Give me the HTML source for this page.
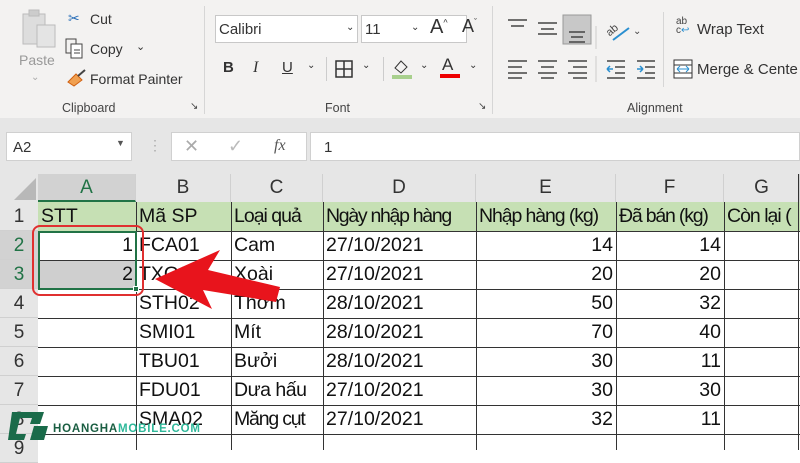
<!DOCTYPE html>
<html><head><meta charset="utf-8"><style>
*{margin:0;padding:0;box-sizing:border-box}
body{width:800px;height:450px;overflow:hidden;background:#fff;font-family:"Liberation Sans",sans-serif;position:relative;color:#222}
.a{position:absolute}
.rib{left:0;top:0;width:800px;height:118px;background:#f3f2f1}
.t{font-size:14px;color:#333;white-space:nowrap}
.g{font-size:12.5px;color:#444}
.cell{position:absolute;font-size:19.5px;line-height:29px;white-space:nowrap;overflow:hidden;padding:0 3px;color:#111}
.r{text-align:right}
.hl{position:absolute;left:38px;width:762px;height:1px;background:#333}
.vl{position:absolute;top:202px;height:248px;width:1px;background:#333}
.ch{position:absolute;top:174px;height:28px;font-size:19px;line-height:28px;text-align:center;color:#333;background:#e6e6e6;border-right:1px solid #d0d0d0}
.rh{position:absolute;left:0;width:38px;height:29px;font-size:19px;line-height:29px;text-align:center;color:#333;background:#e6e6e6;border-bottom:1px solid #d0d0d0}
</style></head><body>
<div class="a rib"></div>
<!-- clipboard -->
<svg class="a" style="left:20px;top:8px" width="40" height="42"><rect x="3" y="6" width="22" height="30" fill="#ddd" stroke="#bbb"/><rect x="9" y="2" width="10" height="6" fill="#ccc" stroke="#bbb"/><rect x="17" y="17" width="18" height="22" fill="#e4e4e4" stroke="#bbb"/></svg>
<div class="a t" style="left:19px;top:52px;color:#999">Paste</div>
<div class="a t" style="left:31px;top:72px;color:#aaa;font-size:10px">⌄</div>
<div class="a t" style="left:68px;top:10px;color:#2a6fb8">✂</div>
<div class="a t" style="left:90px;top:11px">Cut</div>
<svg class="a" style="left:65px;top:38px" width="20" height="22"><rect x="1" y="1" width="10" height="14" fill="none" stroke="#444"/><rect x="6" y="6" width="11" height="14" fill="#fff" stroke="#444"/><line x1="9" y1="12" x2="15" y2="12" stroke="#444"/><line x1="9" y1="15" x2="15" y2="15" stroke="#444"/></svg>
<div class="a t" style="left:90px;top:41px">Copy</div>
<div class="a t" style="left:136px;top:40px;font-size:11px">⌄</div>
<svg class="a" style="left:66px;top:68px" width="22" height="20"><path d="M2 14 L10 6 L16 12 L8 18 Z" fill="#f0a050" stroke="#d06010"/><path d="M12 8 L19 2" stroke="#444" stroke-width="2"/></svg>
<div class="a t" style="left:90px;top:71px">Format Painter</div>
<div class="a g" style="left:62px;top:101px">Clipboard</div>
<div class="a g" style="left:190px;top:101px;font-size:10px">↘</div>
<div class="a" style="left:204px;top:6px;width:1px;height:108px;background:#d6d6d6"></div>
<!-- font -->
<div class="a" style="left:215px;top:15px;width:143px;height:28px;background:#fff;border:1px solid #c8c8c8"></div>
<div class="a t" style="left:219px;top:21px;font-size:15px">Calibri</div>
<div class="a t" style="left:346px;top:22px;font-size:10px">⌄</div>
<div class="a" style="left:361px;top:15px;width:106px;height:28px;background:#fff;border:1px solid #c8c8c8"></div>
<div class="a t" style="left:365px;top:21px;font-size:15px">11</div>
<div class="a t" style="left:411px;top:22px;font-size:10px">⌄</div>
<div class="a t" style="left:430px;top:16px;font-size:20px">A<sup style="font-size:9px">^</sup></div>
<div class="a t" style="left:462px;top:16px;font-size:18px">A<sup style="font-size:9px">ˇ</sup></div>
<div class="a t" style="left:223px;top:59px;font-weight:bold;font-size:15px">B</div>
<div class="a t" style="left:253px;top:59px;font-style:italic;font-family:'Liberation Serif';font-size:16px">I</div>
<div class="a t" style="left:282px;top:59px;text-decoration:underline;font-size:15px">U</div>
<div class="a t" style="left:307px;top:60px;font-size:10px">⌄</div>
<div class="a" style="left:326px;top:57px;width:1px;height:24px;background:#ccc"></div>
<svg class="a" style="left:335px;top:60px" width="18" height="18"><rect x="1" y="1" width="16" height="16" fill="none" stroke="#333" stroke-width="1.5"/><path d="M9 1V17M1 9H17" stroke="#333" stroke-width="1.5"/></svg>
<div class="a t" style="left:362px;top:60px;font-size:10px">⌄</div>
<div class="a" style="left:383px;top:57px;width:1px;height:24px;background:#ccc"></div>
<svg class="a" style="left:391px;top:56px" width="22" height="24"><path d="M4 12 L10 5 L16 11 L10 17 Z" fill="none" stroke="#333"/><rect x="1" y="19" width="20" height="4" fill="#a8d08d"/></svg>
<div class="a t" style="left:420px;top:60px;font-size:10px">⌄</div>
<div class="a t" style="left:442px;top:55px;font-size:17px">A</div>
<div class="a" style="left:440px;top:74px;width:20px;height:4px;background:#e00"></div>
<div class="a t" style="left:469px;top:60px;font-size:10px">⌄</div>
<div class="a g" style="left:325px;top:101px">Font</div>
<div class="a g" style="left:478px;top:101px;font-size:10px">↘</div>
<div class="a" style="left:492px;top:6px;width:1px;height:108px;background:#d6d6d6"></div>
<!-- alignment -->
<svg class="a" style="left:505px;top:14px" width="160" height="70">
<g stroke="#444" stroke-width="1.5">
<path d="M3 6H22M6 12H19" />
<path d="M33 9H52M36 15H49M33 20H52" />
</g>
<rect x="58" y="1" width="28" height="29" fill="#c8c8c8" stroke="#999"/>
<g stroke="#444" stroke-width="1.5"><path d="M64 18H80M66 23H78M64 28H80"/>
<path d="M3 47H22M3 53H17M3 59H22M3 64H17"/><path d="M33 47H52M36 53H49M33 59H52M36 64H49"/><path d="M63 47H82M68 53H82M63 59H82M68 64H82"/>
<path d="M102 47H120M110 53H120M110 59H120M102 64H120"/><path d="M132 47H150M140 53H150M140 59H150M132 64H150"/></g>
<path d="M102 55H108M102 55L105 52M102 55L105 58M132 55H138M138 55L135 52M138 55L135 58" stroke="#2a8fd0" stroke-width="1.5" fill="none"/>
<line x1="91" y1="12" x2="91" y2="35" stroke="#ccc"/><line x1="91" y1="42" x2="91" y2="68" stroke="#ccc"/>
<path d="M108 26 L124 14" stroke="#2a8fd0" stroke-width="2"/>
<text x="100" y="20" font-size="11" fill="#444" transform="rotate(-40 106 15)">ab</text>
<text x="128" y="20" font-size="10" fill="#444">⌄</text>
</svg>
<div class="a" style="left:663px;top:12px;width:1px;height:75px;background:#d6d6d6"></div>
<div class="a" style="left:676px;top:17px;font-size:10px;line-height:9px;color:#444">ab<br>c<span style="color:#2a8fd0">↩</span></div>
<div class="a t" style="left:697px;top:21px;font-size:15px">Wrap Text</div>
<svg class="a" style="left:673px;top:59px" width="20" height="20"><rect x="1" y="1" width="18" height="18" fill="#fff" stroke="#333"/><path d="M1 6H19M1 14H19" stroke="#333"/><path d="M4 10H16M4 10L7 7M4 10L7 13M16 10L13 7M16 10L13 13" stroke="#2a8fd0" fill="none"/></svg>
<div class="a t" style="left:697px;top:61px;font-size:15px">Merge &amp; Cente</div>
<div class="a g" style="left:627px;top:101px">Alignment</div>
<!-- band -->
<div class="a" style="left:0;top:118px;width:800px;height:56px;background:#e6e6e6"></div>
<div class="a" style="left:6px;top:132px;width:126px;height:29px;background:#fff;border:1px solid #d0d0d0"></div>
<div class="a t" style="left:13px;top:139px;font-size:15px">A2</div>
<div class="a t" style="left:116px;top:138px;font-size:9px;color:#555">▼</div>
<div class="a t" style="left:148px;top:137px;color:#aaa;font-size:14px">⋮</div>
<div class="a" style="left:171px;top:132px;width:136px;height:29px;background:#fff;border:1px solid #d0d0d0"></div>
<div class="a t" style="left:184px;top:136px;color:#aaa;font-size:18px">✕</div>
<div class="a t" style="left:228px;top:136px;color:#bbb;font-size:18px">✓</div>
<div class="a t" style="left:274px;top:137px;color:#555;font-size:16px;font-style:italic;font-family:'Liberation Serif'">fx</div>
<div class="a" style="left:310px;top:132px;width:490px;height:29px;background:#fff;border:1px solid #d0d0d0"></div>
<div class="a t" style="left:324px;top:139px;font-size:15px">1</div>
<!-- grid -->
<div class="a" style="left:0;top:174px;width:38px;height:28px;background:#e6e6e6"></div>
<svg class="a" style="left:14px;top:178px" width="22" height="22"><path d="M22 0V22H0Z" fill="#b8b8b8"/></svg>
<div class="ch" style="left:38px;width:98px;background:#d2d2d2;border-bottom:2px solid #217346;color:#217346">A</div>
<div class="ch" style="left:136px;width:95px">B</div>
<div class="ch" style="left:231px;width:92px">C</div>
<div class="ch" style="left:323px;width:153px">D</div>
<div class="ch" style="left:476px;width:140px">E</div>
<div class="ch" style="left:616px;width:108px">F</div>
<div class="ch" style="left:724px;width:76px">G</div>
<div class="rh" style="top:202px">1</div>
<div class="rh" style="top:231px;background:#d2d2d2;color:#217346">2</div>
<div class="rh" style="top:260px;background:#d2d2d2;color:#217346">3</div>
<div class="rh" style="top:289px">4</div>
<div class="rh" style="top:318px">5</div>
<div class="rh" style="top:347px">6</div>
<div class="rh" style="top:376px">7</div>
<div class="rh" style="top:405px">8</div>
<div class="rh" style="top:434px">9</div>
<div class="a" style="left:38px;top:202px;width:762px;height:29px;background:#c6e0b4"></div>
<div class="a" style="left:38px;top:260px;width:98px;height:29px;background:#cfcfcf"></div>
<div class="hl" style="top:231px"></div><div class="hl" style="top:260px"></div><div class="hl" style="top:289px"></div><div class="hl" style="top:318px"></div><div class="hl" style="top:347px"></div><div class="hl" style="top:376px"></div><div class="hl" style="top:405px"></div><div class="hl" style="top:434px"></div>
<div class="vl" style="left:136px"></div><div class="vl" style="left:231px"></div><div class="vl" style="left:323px"></div><div class="vl" style="left:476px"></div><div class="vl" style="left:616px"></div><div class="vl" style="left:724px"></div><div class="vl" style="left:798px;top:174px;height:276px"></div>
<div>
<div class="cell" style="left:38px;top:202px;width:98px">STT</div>
<div class="cell" style="left:136px;top:202px;width:95px">Mã SP</div>
<div class="cell" style="left:231px;top:202px;width:92px;letter-spacing:-1px">Loại quả</div>
<div class="cell" style="left:323px;top:202px;width:153px;letter-spacing:-1.3px">Ngày nhập hàng</div>
<div class="cell" style="left:476px;top:202px;width:140px;letter-spacing:-1.1px">Nhập hàng (kg)</div>
<div class="cell" style="left:616px;top:202px;width:108px;letter-spacing:-1.2px">Đã bán (kg)</div>
<div class="cell" style="left:724px;top:202px;width:76px;letter-spacing:-1px">Còn lại (</div>

<div class="cell r" style="left:38px;top:231px;width:98px">1</div>
<div class="cell r" style="left:38px;top:260px;width:98px">2</div>

<div class="cell" style="left:136px;top:231px">FCA01</div>
<div class="cell" style="left:136px;top:260px">TXO01</div>
<div class="cell" style="left:136px;top:289px">STH02</div>
<div class="cell" style="left:136px;top:318px">SMI01</div>
<div class="cell" style="left:136px;top:347px">TBU01</div>
<div class="cell" style="left:136px;top:376px">FDU01</div>
<div class="cell" style="left:136px;top:405px">SMA02</div>

<div class="cell" style="left:231px;top:231px">Cam</div>
<div class="cell" style="left:231px;top:260px">Xoài</div>
<div class="cell" style="left:231px;top:289px">Thơm</div>
<div class="cell" style="left:231px;top:318px">Mít</div>
<div class="cell" style="left:231px;top:347px">Bưởi</div>
<div class="cell" style="left:231px;top:376px;letter-spacing:-0.5px">Dưa hấu</div>
<div class="cell" style="left:231px;top:405px;width:92px;letter-spacing:-1.2px">Măng cụt</div>

<div class="cell" style="left:323px;top:231px">27/10/2021</div>
<div class="cell" style="left:323px;top:260px">27/10/2021</div>
<div class="cell" style="left:323px;top:289px">28/10/2021</div>
<div class="cell" style="left:323px;top:318px">28/10/2021</div>
<div class="cell" style="left:323px;top:347px">28/10/2021</div>
<div class="cell" style="left:323px;top:376px">27/10/2021</div>
<div class="cell" style="left:323px;top:405px">27/10/2021</div>

<div class="cell r" style="left:476px;top:231px;width:140px">14</div>
<div class="cell r" style="left:476px;top:260px;width:140px">20</div>
<div class="cell r" style="left:476px;top:289px;width:140px">50</div>
<div class="cell r" style="left:476px;top:318px;width:140px">70</div>
<div class="cell r" style="left:476px;top:347px;width:140px">30</div>
<div class="cell r" style="left:476px;top:376px;width:140px">30</div>
<div class="cell r" style="left:476px;top:405px;width:140px">32</div>

<div class="cell r" style="left:616px;top:231px;width:108px">14</div>
<div class="cell r" style="left:616px;top:260px;width:108px">20</div>
<div class="cell r" style="left:616px;top:289px;width:108px">32</div>
<div class="cell r" style="left:616px;top:318px;width:108px">40</div>
<div class="cell r" style="left:616px;top:347px;width:108px">11</div>
<div class="cell r" style="left:616px;top:376px;width:108px">30</div>
<div class="cell r" style="left:616px;top:405px;width:108px">11</div>
</div>
<!-- selection -->
<div class="a" style="left:38px;top:231px;width:99px;height:59px;border:2px solid #217346"></div>
<div class="a" style="left:133px;top:286px;width:6px;height:6px;background:#217346;border:1px solid #fff"></div>
<div class="a" style="left:32px;top:225px;width:112px;height:71px;border:2px solid #e03030;border-radius:8px"></div>
<svg class="a" style="left:0;top:0" width="800" height="450"><polygon points="155,279 220,250 208,270 280,287 276,302 203,290 212,309" fill="#e8141c"/></svg>
<!-- watermark -->
<svg class="a" style="left:6px;top:410px" width="44" height="32"><path d="M6 2H38L34 14H24L26 8H14L10 24H20L18 30H2Z" fill="#1a6b4a"/><path d="M28 16H42L38 30H24Z" fill="#1a6b4a"/></svg>
<div class="a" style="left:53px;top:423px;font-size:11.5px;font-weight:bold;letter-spacing:0.8px;color:#1a5e42">HOANGHA<span style="color:#2fb89a">MOBILE.COM</span></div>
</body></html>
